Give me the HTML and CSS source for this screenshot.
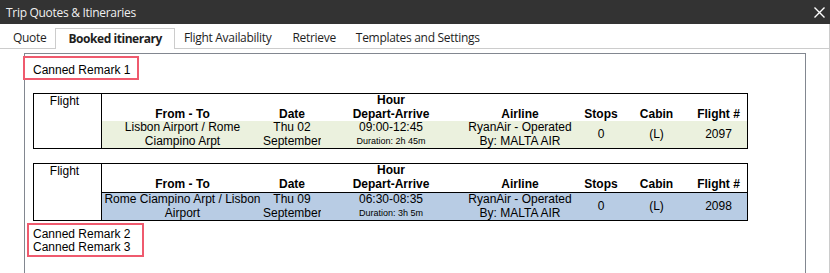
FILE: index.html
```html
<!DOCTYPE html>
<html>
<head>
<meta charset="utf-8">
<link rel="stylesheet" href="styles.css">
</head>
<body>
<div class="titlebar">
  <span class="title">Trip Quotes &amp; Itineraries</span>
  <svg class="close" width="11" height="11" viewBox="0 0 11 11"><path d="M0.5 0.5 L10.5 10.5 M10.5 0.5 L0.5 10.5" stroke="#fff" stroke-width="1.4" fill="none"/></svg>
</div>
<div class="main">
  <div class="tabs">
    <div class="tab first">Quote</div>
    <div class="tab active">Booked itinerary</div>
    <div class="tab after-active">Flight Availability</div>
    <div class="tab">Retrieve</div>
    <div class="tab">Templates and Settings</div>
  </div>
  <div class="panel">
    <div class="remark remark-top">Canned Remark 1</div>

    <div class="flt green">
      <div class="flight">Flight</div>
      <div class="h">&nbsp;<br>From - To</div>
      <div class="h">&nbsp;<br>Date</div>
      <div class="h">Hour<br>Depart-Arrive</div>
      <div class="h">&nbsp;<br>Airline</div>
      <div class="h">&nbsp;<br>Stops</div>
      <div class="h">&nbsp;<br>Cabin</div>
      <div class="h">&nbsp;<br>Flight #</div>
      <div class="d">Lisbon Airport / Rome<br>Ciampino Arpt</div>
      <div class="d">Thu 02<br>September</div>
      <div class="d">09:00-12:45<br><span class="dur">Duration: 2h 45m</span></div>
      <div class="d">RyanAir - Operated<br>By: MALTA AIR</div>
      <div class="d">0</div>
      <div class="d">(L)</div>
      <div class="d">2097</div>
    </div>

    <div class="flt blue">
      <div class="flight">Flight</div>
      <div class="h">&nbsp;<br>From - To</div>
      <div class="h">&nbsp;<br>Date</div>
      <div class="h">Hour<br>Depart-Arrive</div>
      <div class="h">&nbsp;<br>Airline</div>
      <div class="h">&nbsp;<br>Stops</div>
      <div class="h">&nbsp;<br>Cabin</div>
      <div class="h">&nbsp;<br>Flight #</div>
      <div class="d">Rome Ciampino Arpt / Lisbon<br>Airport</div>
      <div class="d">Thu 09<br>September</div>
      <div class="d">06:30-08:35<br><span class="dur">Duration: 3h 5m</span></div>
      <div class="d">RyanAir - Operated<br>By: MALTA AIR</div>
      <div class="d">0</div>
      <div class="d">(L)</div>
      <div class="d">2098</div>
    </div>

    <div class="remark remark-bottom">Canned Remark 2<br>Canned Remark 3</div>
  </div>
</div>
</body>
</html>
```
FILE: styles.css
```css
body {
  margin: 0;
  width: 830px;
  height: 273px;
  overflow: hidden;
  background: #fff;
}

.titlebar {
  height: 24px;
  background: #333333;
  display: flex;
  align-items: center;
  justify-content: space-between;
  padding: 0 5px 0 6px;
  color: #f0f0f0;
  font: 12px "Open Sans", "Noto Sans", sans-serif;
}

.title {
  letter-spacing: -0.3px;
}

.close {
  display: block;
}

.main {
  height: 249px;
  box-sizing: border-box;
  border-right: 1px solid #cccccc;
}

.tabs {
  display: flex;
  align-items: flex-end;
  height: 24px;
  border-bottom: 1px solid #cccccc;
  font: 12px "Open Sans", "Noto Sans", sans-serif;
  color: #1e1e1e;
  letter-spacing: -0.3px;
}

.tab {
  height: 20px;
  line-height: 20px;
  padding: 0 10px;
  box-sizing: border-box;
  white-space: nowrap;
}

.tab.first {
  padding: 0 9px 0 13px;
}

.tab.after-active {
  padding: 0 11px 0 9px;
}

.tab.active {
  height: 21px;
  margin-bottom: -1px;
  padding: 0 12px;
  border: 1px solid #cccccc;
  border-bottom: none;
  background: #fff;
  font-weight: bold;
  letter-spacing: -0.45px;
}

.panel {
  margin: 4px 0 0 24px;
  width: 782px;
  height: 220px;
  box-sizing: border-box;
  border: 1px solid #828790;
  border-bottom: none;
  padding: 2px 8px 0 8px;
  font: 12px "Liberation Sans", Arial, sans-serif;
  color: #000;
}

.remark {
  width: fit-content;
  border: 2px solid #ef5a6e;
}

.remark-top {
  margin-left: -10px;
  padding: 5px 7px 1px 8px;
  line-height: 14px;
}

.remark-bottom {
  margin: 2px 0 0 -6px;
  padding: 3px 12px 1px 4px;
  line-height: 13px;
}

.flt {
  display: grid;
  grid-template-columns: 68px 161px 58px 140px 118px 44px 67px 57px;
  width: 715px;
  box-sizing: border-box;
  border: 1px solid #000;
  line-height: 13.5px;
  text-align: center;
  margin-top: 13px;
}

.flt.blue {
  margin-top: 14px;
}

.flight {
  grid-row: 1 / span 2;
  border-right: 1px solid #000;
  padding: 1px 6px 0 0;
}

.h {
  font-weight: bold;
  height: 27px;
}

.d {
  height: 27px;
  display: flex;
  flex-direction: column;
  justify-content: center;
  white-space: nowrap;
}

.green .d {
  background: #ebf1de;
}

.blue .h {
  height: 28px;
}

.blue .d {
  background: #b8cce4;
  border-top: 1px solid #000;
}

.dur {
  font-size: 9px;
}
```
